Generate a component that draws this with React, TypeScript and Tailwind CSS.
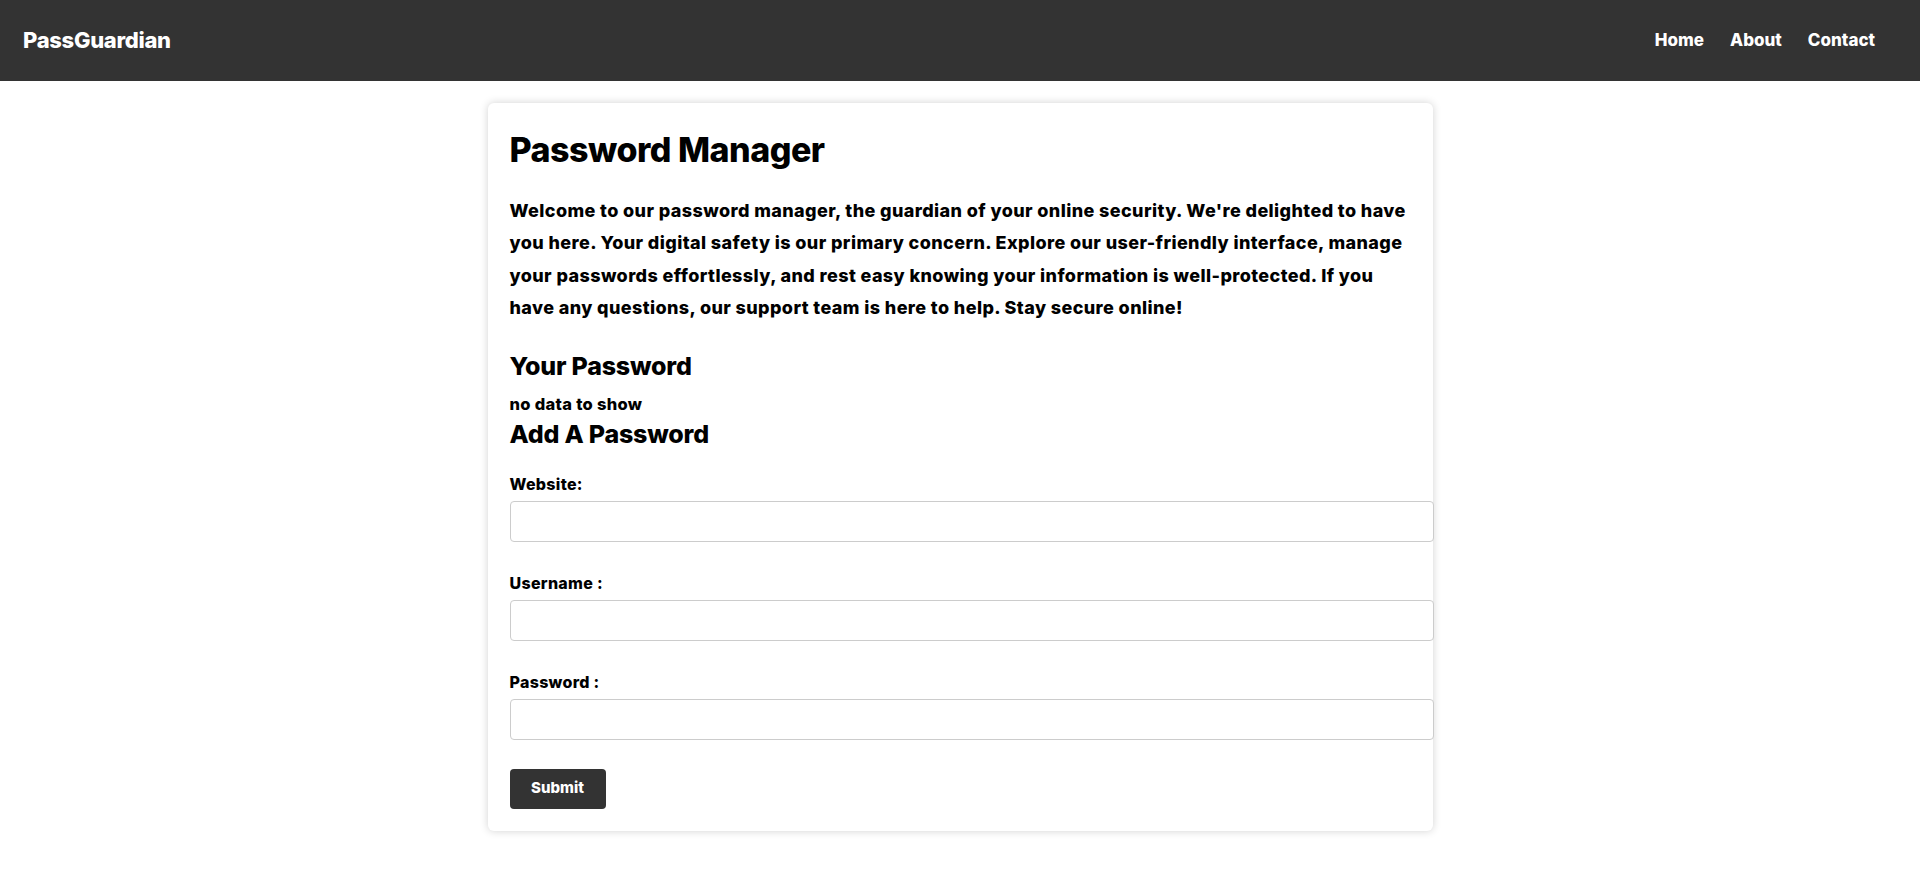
import React, { useState } from "react";

function App() {
  const [website, setWebsite] = useState<string>("");
  const [username, setUsername] = useState<string>("");
  const [password, setPassword] = useState<string>("");

  const handleSubmit = (event: React.FormEvent) => {
    event.preventDefault();
  };

  return (
    <div className="min-h-screen bg-white text-black font-['Inter',sans-serif]">
      <nav className="flex h-[81px] items-center justify-between bg-[#333333] pl-[23px] pr-[45px]">
        <a href="#" className="text-[22px] font-extrabold tracking-[-0.3px] text-white">
          PassGuardian
        </a>
        <ul className="flex gap-[26px] text-[17px] font-extrabold text-white">
          <li>
            <a href="#">Home</a>
          </li>
          <li>
            <a href="#">About</a>
          </li>
          <li>
            <a href="#">Contact</a>
          </li>
        </ul>
      </nav>

      <section className="flex justify-center pt-[22px] pb-10">
        <div className="w-[945px] rounded-md bg-white p-[22px] shadow-[0_0_8px_rgba(0,0,0,0.18)]">
          <h1 className="pt-[3px] text-[34px] font-extrabold leading-[44px] tracking-[-0.5px]">
            Password Manager
          </h1>
          <p className="mt-[23px] text-[18px] font-extrabold leading-[32.4px] tracking-[0.4px]">
            Welcome to our password manager, the guardian of your online security. We're delighted to
            have you here. Your digital safety is our primary concern. Explore our user-friendly
            interface, manage your passwords effortlessly, and rest easy knowing your information is
            well-protected. If you have any questions, our support team is here to help. Stay secure
            online!
          </p>

          <h2 className="mt-[24px] text-[25px] font-extrabold leading-[34px] tracking-[-0.2px]">
            Your Password
          </h2>
          <p className="mt-[11px] text-[16.5px] font-extrabold leading-[20px] tracking-[0.3px]">
            no data to show
          </p>
          <h2 className="mt-[4px] text-[25px] font-extrabold leading-[32px] tracking-[-0.2px]">
            Add A Password
          </h2>

          <form onSubmit={handleSubmit} className="mt-[24px]">
            <div className="mb-[31px]">
              <label htmlFor="website" className="block text-[16px] font-extrabold leading-[20px] tracking-[0.3px]">
                Website:
              </label>
              <input
                id="website"
                type="text"
                value={website}
                onChange={(e) => setWebsite(e.target.value)}
                className="mt-[7px] h-[41px] w-[924px] rounded border border-[#cccccc] px-[10px] outline-none"
              />
            </div>
            <div className="mb-[31px]">
              <label htmlFor="username" className="block text-[16px] font-extrabold leading-[20px] tracking-[0.3px]">
                Username :
              </label>
              <input
                id="username"
                type="text"
                value={username}
                onChange={(e) => setUsername(e.target.value)}
                className="mt-[7px] h-[41px] w-[924px] rounded border border-[#cccccc] px-[10px] outline-none"
              />
            </div>
            <div className="mb-[29px]">
              <label htmlFor="password" className="block text-[16px] font-extrabold leading-[20px] tracking-[0.3px]">
                Password :
              </label>
              <input
                id="password"
                type="password"
                value={password}
                onChange={(e) => setPassword(e.target.value)}
                className="mt-[7px] h-[41px] w-[924px] rounded border border-[#cccccc] px-[10px] outline-none"
              />
            </div>
            <button
              type="submit"
              className="block h-[40px] w-[96px] rounded bg-[#333333] text-[15px] font-extrabold text-white"
            >
              Submit
            </button>
          </form>
        </div>
      </section>
    </div>
  );
}

export default App;
